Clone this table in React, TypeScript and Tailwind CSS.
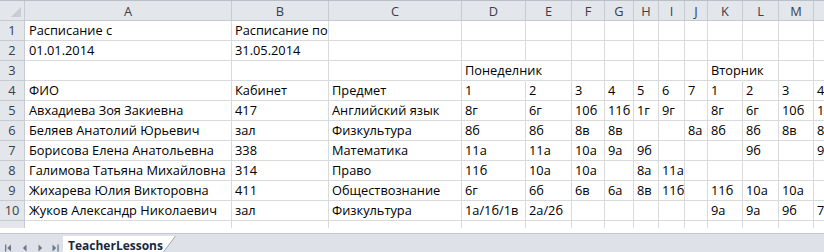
const letters = ['A', 'B', 'C', 'D', 'E', 'F', 'G', 'H', 'I', 'J', 'K', 'L', 'M', 'N'];

const rows: string[][] = [
  ['Расписание с', 'Расписание по', '', '', '', '', '', '', '', '', '', '', '', ''],
  ['01.01.2014', '31.05.2014', '', '', '', '', '', '', '', '', '', '', '', ''],
  ['', '', '', 'Понеделник', '', '', '', '', '', '', 'Вторник', '', '', ''],
  ['ФИО', 'Кабинет', 'Предмет', '1', '2', '3', '4', '5', '6', '7', '1', '2', '3', '4'],
  ['Авхадиева Зоя Закиевна', '417', 'Английский язык', '8г', '6г', '10б', '11б', '1г', '9г', '', '8г', '6г', '10б', '11б'],
  ['Беляев Анатолий Юрьевич', 'зал', 'Физкультура', '8б', '8б', '8в', '8в', '', '', '8а', '8б', '8б', '8в', '8в'],
  ['Борисова Елена Анатольевна', '338', 'Математика', '11а', '11а', '10а', '9а', '9б', '', '', '', '9б', '', '9б'],
  ['Галимова Татьяна Михайловна', '314', 'Право', '11б', '10а', '10а', '', '8а', '11а', '', '', '', '', ''],
  ['Жихарева Юлия Викторовна', '411', 'Обществознание', '6г', '6б', '6в', '6а', '8в', '11б', '', '11б', '10а', '10а', ''],
  ['Жуков Александр Николаевич', 'зал', 'Физкультура', '1а/1б/1в', '2а/2б', '', '', '', '', '', '9а', '9а', '9б', '7а'],
];

// текст, который перетекает в соседнюю пустую ячейку — без линии справа
const spills = new Set(['2-3', '2-10']);

function NavArrows() {
  return (
    <div className="flex items-start pl-[5px] pt-[10px] text-[#6b788b]">
      <svg width="8" height="8" viewBox="0 0 8 8" fill="currentColor">
        <rect x="0" y="0.5" width="1.3" height="7" />
        <path d="M6 0.5 L2.2 4 L6 7.5 Z" />
      </svg>
      <svg width="8" height="8" viewBox="0 0 8 8" fill="currentColor" className="ml-[8px]">
        <path d="M5.5 0.5 L1.8 4 L5.5 7.5 Z" />
      </svg>
      <svg width="8" height="8" viewBox="0 0 8 8" fill="currentColor" className="ml-[7px]">
        <path d="M2.5 0.5 L6.2 4 L2.5 7.5 Z" />
      </svg>
      <svg width="8" height="8" viewBox="0 0 8 8" fill="currentColor" className="ml-[7px]">
        <path d="M1.5 0.5 L5.3 4 L1.5 7.5 Z" />
        <rect x="6.4" y="0.5" width="1.3" height="7" />
      </svg>
    </div>
  );
}

export default function App() {
  return (
    <div className="flex h-[252px] w-[824px] flex-col overflow-hidden bg-white font-['Open_Sans',sans-serif] text-[12.8px] text-black">
      <div className="h-px bg-[#b9bfc8]" />

      <div className="grid grid-cols-[25px_207px_97px_133px_64px_46px_33px_29px_25px_26px_23px_35px_36px_35px_64px]">
        {/* заголовки столбцов */}
        <div className="relative h-[20px] border-b border-r border-[#c6cbd2] bg-[#e3e6eb]">
          <svg width="10" height="10" viewBox="0 0 10 10" className="absolute bottom-[3px] right-[3px]">
            <path d="M10 0 L10 10 L0 10 Z" fill="#c8ccd3" />
          </svg>
        </div>
        {letters.map((l) => (
          <div
            key={l}
            className="h-[20px] border-b border-r border-[#c6cbd2] bg-[#e3e6eb] text-center leading-[21px] text-[#383f4a]"
          >
            {l}
          </div>
        ))}

        {rows.map((row, r) => (
          <div key={r} className="contents">
            <div className="h-[20px] border-b border-r border-[#c6cbd2] bg-[#e3e6eb] text-center leading-[19px] text-[#383f4a]">
              {r + 1}
            </div>
            {row.map((v, c) => (
              <div
                key={c}
                className={`h-[20px] whitespace-nowrap border-b border-r leading-[19px] ${
                  c === 0 ? 'pl-[4px]' : 'pl-[3px]'
                } ${spills.has(`${r}-${c}`) ? 'border-r-transparent border-b-[#d9dadc]' : 'border-[#d9dadc]'}`}
              >
                {v}
              </div>
            ))}
          </div>
        ))}

        {/* обрезанная 11-я строка */}
        <div className="h-[7px] border-r border-[#c6cbd2] bg-[#e3e6eb]" />
        {letters.map((l) => (
          <div key={l} className="h-[7px] border-r border-[#d9dadc]" />
        ))}
      </div>

      <div className="flex-1" />
      <div className="h-px bg-[#c3c9d1]" />

      <div className="flex h-[18px] bg-[#dee2e8]">
        <NavArrows />
        <div className="relative ml-[4px] mt-[2px] w-[113px]">
          <svg width="113" height="16" viewBox="0 0 113 16" className="absolute inset-0">
            <path d="M0 0 L112 0 L100 16 L0 16 Z" fill="#ffffff" />
            <path d="M112.5 0 L100.5 16" stroke="#9ea8b5" strokeWidth="1" fill="none" />
          </svg>
          <span className="relative block pl-[5px] pt-[2px] text-[12px] font-bold leading-[16px] text-[#17283d]">
            TeacherLessons
          </span>
        </div>
      </div>
    </div>
  );
}
